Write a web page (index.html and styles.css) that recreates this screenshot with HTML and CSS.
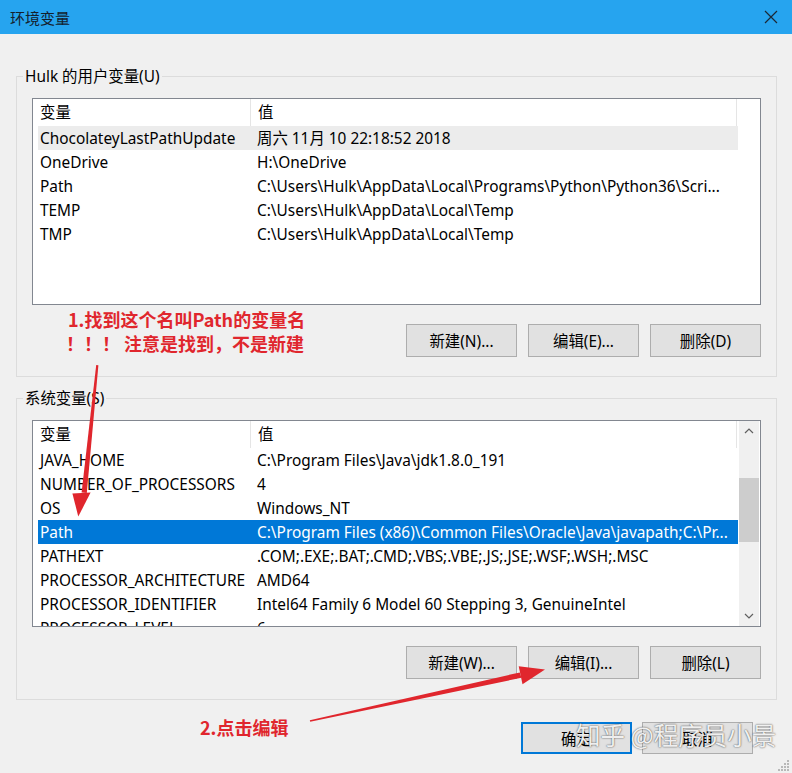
FILE: index.html
```html
<!DOCTYPE html>
<html lang="zh-CN">
<head>
<meta charset="utf-8">
<title>环境变量</title>
<link rel="stylesheet" href="styles.css">
</head>
<body>
<div class="window">
  <header class="titlebar">
    <span class="title">环境变量</span>
    <svg class="close" width="14" height="14" viewBox="0 0 14 14"><path d="M1 1 L13 13 M13 1 L1 13" stroke="#1b2836" stroke-width="1.2" fill="none"/></svg>
  </header>

  <main class="content">
    <fieldset class="group group-user">
      <legend>Hulk 的用户变量(U)</legend>
      <div class="list">
        <div class="list-main">
          <div class="list-head"><span class="hcell hcell-name">变量</span><span class="hcell hcell-value">值</span></div>
          <div class="rows">
            <div class="row row-hover"><span class="cell-name">ChocolateyLastPathUpdate</span><span class="cell-value">周六 11月 10 22:18:52 2018</span></div>
            <div class="row"><span class="cell-name">OneDrive</span><span class="cell-value">H:\OneDrive</span></div>
            <div class="row"><span class="cell-name">Path</span><span class="cell-value">C:\Users\Hulk\AppData\Local\Programs\Python\Python36\Scri...</span></div>
            <div class="row"><span class="cell-name">TEMP</span><span class="cell-value">C:\Users\Hulk\AppData\Local\Temp</span></div>
            <div class="row"><span class="cell-name">TMP</span><span class="cell-value">C:\Users\Hulk\AppData\Local\Temp</span></div>
          </div>
        </div>
      </div>
      <div class="buttons">
        <button class="btn">新建(N)...</button>
        <button class="btn">编辑(E)...</button>
        <button class="btn">删除(D)</button>
      </div>
    </fieldset>

    <fieldset class="group group-system">
      <legend>系统变量(S)</legend>
      <div class="list">
        <div class="list-main">
          <div class="list-head"><span class="hcell hcell-name">变量</span><span class="hcell hcell-value">值</span></div>
          <div class="rows">
            <div class="row"><span class="cell-name">JAVA_HOME</span><span class="cell-value">C:\Program Files\Java\jdk1.8.0_191</span></div>
            <div class="row"><span class="cell-name">NUMBER_OF_PROCESSORS</span><span class="cell-value">4</span></div>
            <div class="row"><span class="cell-name">OS</span><span class="cell-value">Windows_NT</span></div>
            <div class="row row-selected"><span class="cell-name">Path</span><span class="cell-value">C:\Program Files (x86)\Common Files\Oracle\Java\javapath;C:\Pr...</span></div>
            <div class="row"><span class="cell-name">PATHEXT</span><span class="cell-value">.COM;.EXE;.BAT;.CMD;.VBS;.VBE;.JS;.JSE;.WSF;.WSH;.MSC</span></div>
            <div class="row"><span class="cell-name">PROCESSOR_ARCHITECTURE</span><span class="cell-value">AMD64</span></div>
            <div class="row"><span class="cell-name">PROCESSOR_IDENTIFIER</span><span class="cell-value">Intel64 Family 6 Model 60 Stepping 3, GenuineIntel</span></div>
            <div class="row"><span class="cell-name">PROCESSOR_LEVEL</span><span class="cell-value">6</span></div>
          </div>
        </div>
        <div class="scrollbar">
          <div class="sb-btn"><svg width="10" height="6" viewBox="0 0 10 6"><path d="M1 5 L5 1 L9 5" stroke="#606060" stroke-width="1.2" fill="none"/></svg></div>
          <div class="sb-track"><div class="sb-thumb"></div></div>
          <div class="sb-btn"><svg width="10" height="6" viewBox="0 0 10 6"><path d="M1 1 L5 5 L9 1" stroke="#606060" stroke-width="1.2" fill="none"/></svg></div>
        </div>
      </div>
      <div class="buttons">
        <button class="btn">新建(W)...</button>
        <button class="btn">编辑(I)...</button>
        <button class="btn">删除(L)</button>
      </div>
    </fieldset>
  </main>

  <footer class="footer">
    <button class="btn btn-default">确定</button>
    <button class="btn">取消</button>
  </footer>

  <svg class="arrows" width="792" height="773" viewBox="0 0 792 773">
    <g fill="#e0262d">
      <polygon points="96.2,365 98.4,365.3 86.8,493 81.6,492.4"/>
      <polygon points="72.4,493.4 90.6,492.6 78.3,516.5"/>
      <polygon points="309.8,720.2 310.2,721.8 521.4,677.8 519.8,672.4"/>
      <polygon points="518.7,666.2 522.5,684.2 545,669.5"/>
    </g>
  </svg>

  <div class="note note-1">1.找到这个名叫Path的变量名</div>
  <div class="note note-2">！！！ 注意是找到，不是新建</div>
  <div class="note note-3">2.点击编辑</div>

  <div class="watermark">知乎 @程序员小景</div>

  <svg class="grip" width="12" height="12" viewBox="0 0 12 12">
    <g fill="#b8b8b8">
      <rect x="9" y="1" width="2" height="2"/>
      <rect x="6" y="4" width="2" height="2"/><rect x="9" y="4" width="2" height="2"/>
      <rect x="3" y="7" width="2" height="2"/><rect x="6" y="7" width="2" height="2"/><rect x="9" y="7" width="2" height="2"/>
      <rect x="0" y="10" width="2" height="2"/><rect x="3" y="10" width="2" height="2"/><rect x="6" y="10" width="2" height="2"/><rect x="9" y="10" width="2" height="2"/>
    </g>
  </svg>
</div>
</body>
</html>
```

FILE: styles.css
```css
* { box-sizing: border-box; }

html, body {
  margin: 0;
  padding: 0;
}

body {
  width: 792px;
  height: 773px;
  overflow: hidden;
  background: #f0f0f0;
  font-family: "Noto Sans", "Noto Sans CJK SC", sans-serif;
  font-size: 15.4px;
  color: #000;
}

.window {
  position: relative;
  width: 792px;
  height: 773px;
  background: #f0f0f0;
}

.titlebar {
  height: 34px;
  background: #26a4ef;
  display: flex;
  align-items: center;
  justify-content: space-between;
  padding: 0 14px 0 10px;
}

.title {
  font-family: "Noto Sans CJK SC", sans-serif;
  font-size: 15px;
  color: #14202c;
}

.close { display: block; }

.content {
  padding: 32px 15px 0 16px;
}

.group {
  margin: 0;
  padding: 0 15px 19px 15px;
  border: 1px solid #dcdcdc;
  min-width: 0;
  width: 761px;
}

.group-system {
  margin-top: 11px;
  padding-bottom: 20px;
}

.group legend {
  font-family: "Noto Sans", "Noto Sans CJK SC", sans-serif;
  font-size: 15.4px;
  line-height: 18px;
  height: 20px;
  padding: 2px 2px 0 2px;
  margin-left: -9px;
  color: #000;
}

.list {
  margin-top: 12px;
  height: 207px;
  border: 1px solid #828790;
  background: #fff;
  display: flex;
  overflow: hidden;
}

.list-main {
  flex: 0 0 705px;
  overflow: hidden;
}

.list-head {
  display: flex;
  height: 27px;
  width: 704px;
  border-right: 1px solid #e5e5e5;
  align-items: stretch;
}

.hcell {
  padding: 1px 0 0 7px;
  line-height: 26px;
}

.hcell-name {
  width: 218px;
  border-right: 1px solid #e5e5e5;
}

.rows {
  margin-left: 5px;
  width: 700px;
}

.row {
  display: flex;
  height: 24px;
  padding-top: 1px;
  line-height: 23px;
  white-space: nowrap;
}

.cell-name {
  flex: 0 0 217px;
  padding-left: 2px;
  overflow: hidden;
}

.cell-value {
  padding-left: 2px;
  overflow: hidden;
}

.row-hover { background: #ececec; }

.row-selected {
  background: #0078d7;
  color: #fff;
}

.scrollbar {
  flex: 0 0 20px;
  margin-left: 1px;
  background: #f0f0f0;
  display: flex;
  flex-direction: column;
}

.sb-btn {
  height: 20px;
  display: flex;
  align-items: center;
  justify-content: center;
}

.sb-btn svg { display: block; }

.sb-track {
  flex: 1;
  padding-top: 37px;
}

.sb-thumb {
  height: 64px;
  background: #cdcdcd;
}

.buttons {
  display: flex;
  justify-content: flex-end;
  gap: 11px;
  margin-top: 19px;
}

.btn {
  width: 111px;
  height: 33px;
  margin: 0;
  padding: 0;
  background: #e1e1e1;
  border: 1px solid #adadad;
  font-family: "Noto Sans", "Noto Sans CJK SC", sans-serif;
  font-size: 15.4px;
  color: #000;
}

.footer {
  display: flex;
  justify-content: flex-end;
  gap: 10px;
  margin-top: 22px;
  padding-right: 39px;
}

.footer .btn { height: 32px; }

.btn-default {
  border: 2px solid #0078d7;
}

.arrows {
  position: absolute;
  left: 0;
  top: 0;
  pointer-events: none;
}

.note {
  position: absolute;
  font-family: "Noto Sans CJK SC", sans-serif;
  font-weight: 700;
  font-size: 18px;
  line-height: 24px;
  color: #e0262d;
  white-space: nowrap;
}

.note-1 { left: 68px; top: 307px; }
.note-2 { left: 66px; top: 331px; }
.note-3 { left: 200px; top: 715px; }

.watermark {
  position: absolute;
  left: 576px;
  top: 720px;
  font-family: "Noto Sans CJK SC", sans-serif;
  font-size: 24.5px;
  line-height: 30px;
  color: rgba(255, 255, 255, 0.92);
  text-shadow: 0 0 2px rgba(0, 0, 0, 0.55), 0 0 1px rgba(0, 0, 0, 0.4);
  white-space: nowrap;
}

.grip {
  position: absolute;
  right: 2px;
  bottom: 2px;
}
```
